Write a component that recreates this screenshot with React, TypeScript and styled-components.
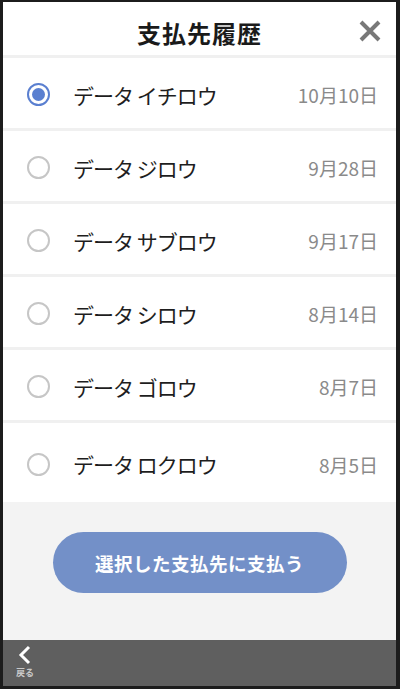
import styled, { createGlobalStyle } from 'styled-components';

const GlobalStyle = createGlobalStyle`
  html, body {
    margin: 0;
    padding: 0;
    background: #ffffff;
  }
  * {
    box-sizing: border-box;
  }
`;

interface Payee {
  name: string;
  date: string;
}

const payees: Payee[] = [
  { name: 'データ イチロウ', date: '10月10日' },
  { name: 'データ ジロウ', date: '9月28日' },
  { name: 'データ サブロウ', date: '9月17日' },
  { name: 'データ シロウ', date: '8月14日' },
  { name: 'データ ゴロウ', date: '8月7日' },
  { name: 'データ ロクロウ', date: '8月5日' },
];

const Frame = styled.div`
  width: 400px;
  height: 689px;
  display: flex;
  flex-direction: column;
  border: 3px solid #1c1c1c;
  border-top-width: 2px;
  border-right-width: 4px;
  background: #ffffff;
  font-family: 'Noto Sans CJK JP', 'Noto Sans', sans-serif;
  overflow: hidden;
`;

const Header = styled.header`
  height: 56px;
  flex-shrink: 0;
  display: flex;
  align-items: center;
  justify-content: center;
  position: relative;
  padding-top: 7px;
  border-bottom: 3px solid #f0f0f0;
`;

const Title = styled.h1`
  margin: 0;
  font-size: 24px;
  font-weight: 700;
  color: #1a1a1a;
  letter-spacing: 1px;
`;

const CloseButton = styled.button`
  position: absolute;
  right: 13px;
  top: 16px;
  width: 26px;
  height: 26px;
  padding: 0;
  border: none;
  background: none;
  display: flex;
  align-items: center;
  justify-content: center;
`;

const List = styled.ul`
  flex: 1;
  margin: 0;
  padding: 0;
  list-style: none;
  display: flex;
  flex-direction: column;
`;

const Row = styled.li`
  height: 73px;
  flex-shrink: 0;
  display: flex;
  align-items: center;
  padding: 3px 18px 0 24px;
  border-bottom: 3px solid #f0f0f0;

  &:last-child {
    flex: 1;
    border-bottom: none;
  }
`;

const Radio = styled.span<{ $checked: boolean }>`
  width: 23px;
  height: 23px;
  border-radius: 50%;
  flex-shrink: 0;
  border: 2px solid ${(p) => (p.$checked ? '#5a7fd0' : '#c6c6c6')};
  display: flex;
  align-items: center;
  justify-content: center;

  &::after {
    content: '';
    display: ${(p) => (p.$checked ? 'block' : 'none')};
    width: 13px;
    height: 13px;
    border-radius: 50%;
    background: #5a7fd0;
  }
`;

const Name = styled.span`
  margin-left: 23px;
  font-size: 21px;
  color: #1e1e1e;
  letter-spacing: -1px;
`;

const DateText = styled.span`
  margin-left: auto;
  font-size: 19px;
  color: #8a8a8a;
`;

const Footer = styled.div`
  height: 138px;
  flex-shrink: 0;
  background: #f3f3f3;
  display: flex;
  justify-content: center;
  padding-top: 30px;
`;

const PayButton = styled.button`
  width: 294px;
  height: 61px;
  border: none;
  border-radius: 31px;
  background: #7390c8;
  color: #ffffff;
  font-family: inherit;
  font-size: 18.5px;
  font-weight: 700;
  letter-spacing: 0.5px;
`;

const BottomBar = styled.nav`
  height: 46px;
  flex-shrink: 0;
  background: #5f5f5f;
  display: flex;
  align-items: flex-start;
  padding-left: 13px;
`;

const BackButton = styled.button`
  border: none;
  background: none;
  padding: 5px 0 0;
  display: flex;
  flex-direction: column;
  align-items: center;
  font-family: inherit;
`;

const BackLabel = styled.span`
  font-size: 9px;
  font-weight: 700;
  color: #c9c9c9;
  line-height: 1;
  margin-top: 3px;
`;

export default function App() {
  return (
    <>
      <GlobalStyle />
      <Frame>
        <Header>
          <Title>支払先履歴</Title>
          <CloseButton aria-label="閉じる">
            <svg width="24" height="22" viewBox="0 0 24 22">
              <path d="M3 2 L21 20 M21 2 L3 20" stroke="#787878" strokeWidth="4" strokeLinecap="butt" />
            </svg>
          </CloseButton>
        </Header>
        <List>
          {payees.map((p, i) => (
            <Row key={p.name}>
              <Radio $checked={i === 0} />
              <Name>{p.name}</Name>
              <DateText>{p.date}</DateText>
            </Row>
          ))}
        </List>
        <Footer>
          <PayButton>選択した支払先に支払う</PayButton>
        </Footer>
        <BottomBar>
          <BackButton>
            <svg width="14" height="20" viewBox="0 0 14 20">
              <path d="M11 2 L3 10 L11 18" stroke="#ffffff" strokeWidth="3" fill="none" />
            </svg>
            <BackLabel>戻る</BackLabel>
          </BackButton>
        </BottomBar>
      </Frame>
    </>
  );
}
